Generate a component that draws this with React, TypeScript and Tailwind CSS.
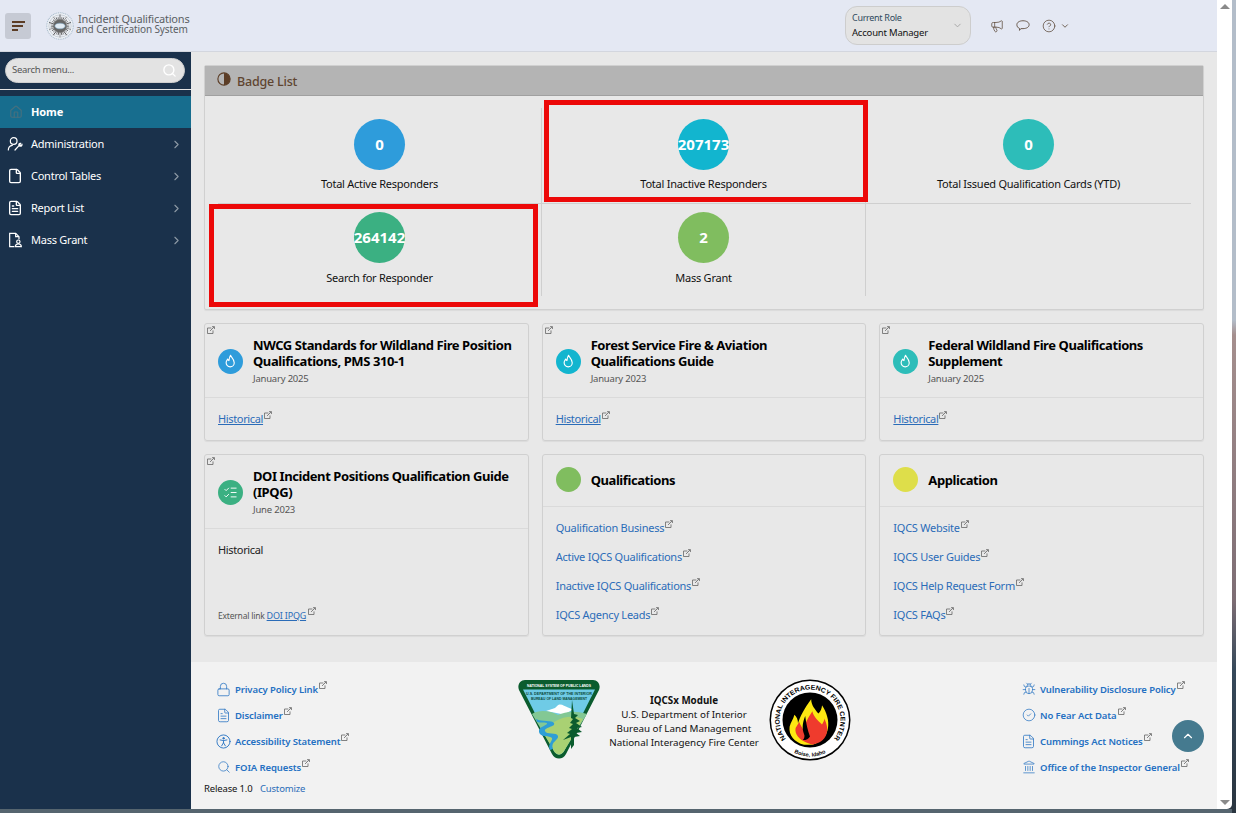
import { Home, File, FileText, ChevronRight, ChevronDown, ChevronUp, Search, Lock, Bug, CircleCheck, Landmark, Megaphone, CircleHelp, ListChecks } from "lucide-react";

const ExtIcon = ({ className = "" }: { className?: string }) => (
  <svg viewBox="0 0 10 10" className={"ml-[1px] inline-block h-[8px] w-[8px] text-[#707070] " + className} fill="none" stroke="currentColor" strokeWidth="1.100">
    <path d="M5.500 2.500H.6v6.900h6.900V5.500" />
    <path d="M3.800 6.200L9 1M6.300 .8H9.300V3.800" />
  </svg>
);

const FlameIcon = () => (
  <svg viewBox="0 0 24 24" className="h-[15px] w-[15px]" fill="none" stroke="white" strokeWidth="1.800" strokeLinejoin="round">
    <path d="M12 2c1 3 6 6 6 12a6.500 6.500 0 0 1-13 0c0-3 1.500-4.500 2.500-6 .5 1.500 1 2 2 2.500C10 7.500 10.500 4.500 12 2z" />
  </svg>
);

function AdminIcon() {
  return (
    <svg viewBox="0 0 24 24" className="h-[16px] w-[16px]" fill="none" stroke="white" strokeWidth="1.800" strokeLinecap="round">
      <circle cx="10" cy="7.500" r="5" />
      <path d="M2 21c0-4 2.500-6.500 6-7" />
      <path d="M12 21l6-6.500M18 14.500c-1-2 .5-4 2.500-3.500l-1.500 2 1.500 1.500 2-1.500c.2 2-1.800 3.200-4.500 1.500z" />
    </svg>
  );
}

function MassGrantIcon() {
  return (
    <svg viewBox="0 0 24 24" className="h-[16px] w-[16px]" fill="none" stroke="white" strokeWidth="1.800">
      <path d="M11 22H4V2h9l5 5v4" />
      <path d="M13 2v5h5" />
      <circle cx="17" cy="14.500" r="2.500" />
      <path d="M12.500 22c0-3 2-4 4.500-4s4.500 1 4.500 4z" />
    </svg>
  );
}

function SealLogo() {
  const rays = Array.from({ length: 30 }, (_, i) => i * 12);
  return (
    <svg viewBox="0 0 54 54" className="h-[28px] w-[28px] shrink-0">
      <circle cx="27" cy="27" r="25.500" fill="#eef1f6" stroke="#a9bccb" strokeWidth="2" strokeDasharray="2 1.500" />
      <circle cx="27" cy="27" r="21.500" fill="none" stroke="#9aa5b0" strokeWidth=".8" />
      {rays.map((r) => (
        <line key={r} x1="27" y1="16" x2="27" y2={r % 36 === 0 ? 5 : 9} stroke={r % 24 === 0 ? "#333" : "#777"} strokeWidth="1.400" transform={`rotate(${r} 27 27)`} />
      ))}
      <circle cx="27" cy="27" r="13" fill="#666" stroke="#999" strokeDasharray="3 2" />
      <ellipse cx="27" cy="27" rx="10" ry="5.500" fill="#e2ecf4" stroke="#7fa8c4" />
    </svg>
  );
}

function BlmLogo() {
  return (
    <svg viewBox="0 0 84 80" className="h-[80px] w-[84px] shrink-0">
      <path d="M8 1h68c5 0 8 5 6 10L49 75c-3 6-11 6-14 0L2 11C0 6 3 1 8 1z" fill="#0b5c2e" />
      <path d="M6 10.500h72L47 72c-2.500 4.500-7.500 4.500-10 0z" fill="#6fcbe6" />
      <path d="M29 32l9-3c2-2 4-4 5-3.500 3 0 5 2 8 3l5 2-9 5z" fill="white" />
      <path d="M15 35c8-5 18-3 26 1 7-3 16-5 29-1L47 72c-2.500 4.500-7.500 4.500-10 0z" fill="#83c894" />
      <path d="M26 53c10-12 24-19 40-13L47 72c-2.500 4.500-7.500 4.500-10 0z" fill="#a9d173" />
      <path d="M19 40c6 3 16 1 18 4 2 4-10 4-9 8 1 4 12 1 13 5s-8 6-5 13l-3 1c-3-6 3-9 2-12-2-3-12 0-13-6s9-6 8-9c-3-1-7 0-10-1z" fill="#2e9ed6" />
      <path d="M55 21l2 14 4 1-3 3 5 3-4 2 6 4-5 1 5 4-6 1 4 3-6 1v8l-3 4v-12l-8 3 7-6-3-1 5-4-3-1 4-4-3-1 3-4-2-1z" fill="#0b5c2e" />
      <text x="42" y="7.500" textAnchor="middle" fontSize="3.600" textLength="64" lengthAdjust="spacingAndGlyphs" fontWeight="700" fill="white" fontFamily="Liberation Sans, sans-serif">NATIONAL SYSTEM OF PUBLIC LANDS</text>
      <text x="42" y="15.500" textAnchor="middle" fontSize="3.800" textLength="66" lengthAdjust="spacingAndGlyphs" fontWeight="700" fill="#0b4a3a" fontFamily="Liberation Sans, sans-serif">U.S. DEPARTMENT OF THE INTERIOR</text>
      <text x="42" y="20.500" textAnchor="middle" fontSize="3.400" textLength="56" lengthAdjust="spacingAndGlyphs" fontWeight="700" fill="#0b4a3a" fontFamily="Liberation Sans, sans-serif">BUREAU OF LAND MANAGEMENT</text>
    </svg>
  );
}

function NifcLogo() {
  return (
    <svg viewBox="0 0 82 82" className="h-[82px] w-[82px] shrink-0">
      <circle cx="41" cy="41" r="40.500" fill="black" />
      <circle cx="41" cy="41" r="39" fill="white" />
      <circle cx="41" cy="41" r="27.500" fill="black" />
      <defs>
        <path id="nifcTop" d="M17.600 60.600A30.500 30.500 0 1 1 64.400 60.600" />
        <path id="nifcBottom" d="M22.750 72.600A36.500 36.500 0 0 0 59.250 72.600" />
      </defs>
      <text fontSize="6.600" fontWeight="700" fill="black" fontFamily="Liberation Sans, sans-serif">
        <textPath href="#nifcTop" startOffset="50%" textAnchor="middle" textLength="136" lengthAdjust="spacingAndGlyphs">NATIONAL INTERAGENCY FIRE CENTER</textPath>
      </text>
      <text fontSize="5.500" fontWeight="700" fill="black" fontFamily="Liberation Sans, sans-serif">
        <textPath href="#nifcBottom" startOffset="50%" textAnchor="middle">Boise, Idaho</textPath>
      </text>
      <g transform="translate(41 43) scale(1.200) translate(-41 -43)">
        <path d="M36 62c-8-2-13-8-12-15 1-4 3-6 4-10 2 2 3 4 3 7 2-6 5-12 11-20 0 5 3 8 6 12 2-2 3-5 3-7 4 6 6 13 5 19-1 7-6 12-13 14z" fill="#fde812" />
        <path d="M38 60c-6-2-10-7-9-12l3-5c1 3 3 5 4 8 0-6 3-11 7-17 1 5 5 8 8 11 1-2 2-3 2-5 2 5 3 8 2 12-1 5-5 8-9 9l-3 1z" fill="#ef3b2d" />
        <path d="M37 38c-2 5-3 10-1 15 1 2 0 4-1 5 3 0 5-1 6-3-2-5-3-10-4-17z" fill="black" />
      </g>
    </svg>
  );
}

function AccessIcon() {
  return (
    <svg viewBox="0 0 24 24" className="h-[15px] w-[15px]" fill="none" stroke="#2f78c4" strokeWidth="1.500" strokeLinecap="round">
      <circle cx="12" cy="12" r="10.500" />
      <circle cx="12" cy="6.800" r="1.200" fill="#2f78c4" />
      <path d="M6.500 9.500L12 10.500l5.500-1M12 10.500v3.500M12 14l-3 5M12 14l3 5" />
    </svg>
  );
}

const badges = [
  { value: "0", label: "Total Active Responders", color: "bg-[#2e9cdb]" },
  { value: "207173", label: "Total Inactive Responders", color: "bg-[#12b5cf]" },
  { value: "0", label: "Total Issued Qualification Cards (YTD)", color: "bg-[#2dbdb9]" },
  { value: "264142", label: "Search for Responder", color: "bg-[#3bb082]" },
  { value: "2", label: "Mass Grant", color: "bg-[#80bd5f]" },
];

const menu = [
  { name: "Administration", icon: <AdminIcon /> },
  { name: "Control Tables", icon: <File size={16} color="white" /> },
  { name: "Report List", icon: <FileText size={16} color="white" /> },
  { name: "Mass Grant", icon: <MassGrantIcon /> },
];

function Badge({ value, label, color, top, divider }: { value: string; label: string; color: string; top: string; divider: boolean }) {
  return (
    <div className={"flex flex-col items-center " + top + (divider ? " border-r border-[#cfcfcf]" : "")}>
      <div className={"flex h-[51px] w-[51px] items-center justify-center overflow-visible rounded-full text-[15px] font-bold text-white " + color}>{value}</div>
      <div className="mt-[7px] text-[11px] leading-[14px] tracking-[-0.25px] text-[#111]">{label}</div>
    </div>
  );
}

function GuideCard({ title, date, color, icon, children, tall }: { title: React.ReactNode; date?: string; color: string; icon?: React.ReactNode; children: React.ReactNode; tall?: boolean }) {
  return (
    <div className="flex flex-col rounded-[3px] border border-[#d0d0d0] shadow-[0_1px_1px_rgba(0,0,0,0.06)]">
      <div className={"flex flex-col border-b border-[#dadada] " + (tall ? "h-[52px] justify-center pb-[2px]" : "h-[74px]")}>
        {!tall && <div className="flex h-[3px] items-start pl-[1px] pt-[2px]"><ExtIcon className="shrink-0" /></div>}
        <div className={"flex items-center gap-[10px] pl-[13px] " + (tall ? "" : "pt-[10px]")}>
          <div className={"flex h-[25px] w-[25px] shrink-0 items-center justify-center rounded-full " + color}>{icon}</div>
          <div>
            <div className="text-[13px] font-bold leading-[16px] tracking-[-0.42px] text-black">{title}</div>
            {date && <div className="mt-[3px] text-[9.500px] leading-[13px] tracking-[-0.2px] text-[#555]">{date}</div>}
          </div>
        </div>
      </div>
      {children}
    </div>
  );
}

function CardLink({ text }: { text: string }) {
  return (
    <div className="text-[11px] leading-[14px] tracking-[-0.25px] text-[#2b6cb8]">
      {text}<ExtIcon className="align-[4px]" />
    </div>
  );
}

function Historical() {
  return (
    <div className="pl-[13px] pt-[13px] text-[11px] leading-[16px] tracking-[-0.35px] text-[#2b6cb8]">
      <span className="underline">Historical</span><ExtIcon className="align-[4px]" />
    </div>
  );
}

function FootLink({ icon, text }: { icon: React.ReactNode; text: string }) {
  return (
    <div className="flex h-[26px] items-center gap-[4px]">
      <span className="flex w-[15px] shrink-0 justify-center">{icon}</span>
      <span className="text-[9.500px] font-semibold tracking-[-0.1px] text-[#2470c2]">
        {text}<ExtIcon className="align-[4px]" />
      </span>
    </div>
  );
}

export default function App() {
  return (
    <div className="relative flex h-[813px] w-[1236px] flex-col overflow-hidden bg-[linear-gradient(180deg,#b3bdc9_0,#b3bdc9_320px,#a58f8e_335px,#7d6d74_600px,#36495a_670px,#2a3540_813px)] font-['Noto_Sans',sans-serif]">
      <div className="flex h-[809px] w-[1232px]">
        <div className="flex w-[1217px] flex-col">
          <header className="flex h-[52px] shrink-0 items-center justify-between border-b border-[#d3d6de] bg-[#e4e8f3] pr-[147px]">
            <div className="flex items-center">
              <button className="ml-[5px] flex h-[26px] w-[26px] flex-col justify-center gap-[2px] rounded-[3px] bg-[#c6cad4] pl-[7px]">
                <span className="h-[2px] w-[13px] bg-[#5c3d26]" />
                <span className="h-[2px] w-[11px] bg-[#5c3d26]" />
                <span className="h-[2px] w-[6px] bg-[#5c3d26]" />
              </button>
              <div className="ml-[15px]"><SealLogo /></div>
              <div className="mb-[4px] ml-[2px] leading-[10px] text-[#5b5f63]">
                <div className="ml-[2px] text-[11px] tracking-[-0.2px]">Incident Qualifications</div>
                <div className="text-[10px] tracking-[-0.1px]">and Certification System</div>
              </div>
            </div>
            <div className="flex items-center">
              <div className="flex h-[39px] w-[126px] items-center justify-between rounded-[12px] border border-[#cdcdcd] bg-[#e3e3e3] pl-[6px] pr-[7px]">
                <div>
                  <div className="text-[9px] leading-[14px] tracking-[-0.3px] text-[#2f4a5e]">Current Role</div>
                  <div className="mt-[1px] text-[9.500px] leading-[14px] tracking-[-0.2px] text-[#111]">Account Manager</div>
                </div>
                <ChevronDown size={11} color="#a3a3a3" />
              </div>
              <Megaphone size={14} color="#5c4a3a" strokeWidth={1.300} className="ml-[19px]" />
              <svg viewBox="0 0 16 16" className="ml-[12px] h-[14px] w-[14px]" fill="none" stroke="#5c4a3a" strokeWidth="1">
                <path d="M8 2c3.800 0 7 1.700 7 4.500S12 11 8 11H5.500l-1.500 2v-2.200C2 10 1 8.500 1 6.500 1 3.700 4.200 2 8 2z" />
              </svg>
              <CircleHelp size={14} color="#5c4a3a" strokeWidth={1.300} className="ml-[12px]" />
              <ChevronDown size={10} color="#5c4a3a" className="ml-[4px]" />
            </div>
          </header>

          <div className="flex min-h-0 flex-1">
            <aside className="w-[191px] shrink-0 bg-[#1a314b]">
              <div className="px-[5px] pt-[6px]">
                <div className="flex h-[25px] w-[180px] items-center justify-between rounded-full border border-[#cfcfcf] bg-[#e3e3e3] pl-[6px] pr-[7px] text-[9.500px] tracking-[-0.3px] text-[#555]">
                  Search menu...
                  <Search size={15} color="white" strokeWidth={2.200} />
                </div>
              </div>
              <div className="mt-[6px] h-px bg-[#e6e6e6]" />
              <div className="mt-[6px] flex h-[32px] items-center bg-[#176d8e] pl-[9px]">
                <Home size={14} color="#45707f" />
                <span className="ml-[8px] text-[11px] font-bold tracking-[-0.1px] text-white">Home</span>
              </div>
              {menu.map((m) => (
                <div key={m.name} className="flex h-[32px] items-center pl-[7px] pr-[8px]">
                  <span className="flex w-[16px] justify-center">{m.icon}</span>
                  <span className="ml-[8px] flex-1 text-[11px] tracking-[-0.25px] text-white">{m.name}</span>
                  <ChevronRight size={13} color="#8d99a5" />
                </div>
              ))}
            </aside>

            <div className="flex min-w-0 flex-1 flex-col">
              <main className="flex-1 bg-[#e8e8e8] px-[13px] pt-[13px]">
                <section className="relative h-[245px] rounded-[2px] border border-[#d0d0d0] shadow-[0_1px_1px_rgba(0,0,0,0.06)]">
                  <div className="flex h-[30px] items-center border-b border-[#a0a0a0] bg-[#b4b4b4] pl-[12px]">
                    <svg viewBox="0 0 16 16" className="mb-[3px] h-[14px] w-[14px]">
                      <circle cx="8" cy="8" r="7" fill="none" stroke="#5c3d26" strokeWidth="1.300" />
                      <path d="M8 1a7 7 0 0 1 0 14z" fill="#5c3d26" />
                    </svg>
                    <span className="ml-[6px] mt-[3px] text-[12.500px] font-medium tracking-[-0.2px] text-[#5f4530]">Badge List</span>
                  </div>
                  <div className="mx-[13px] mt-[12px] grid grid-cols-[324px_324px_325px] grid-rows-[96px_92px]">
                    <Badge {...badges[0]} top="pt-[11px] border-b border-[#cfcfcf]" divider />
                    <Badge {...badges[1]} top="pt-[11px] border-b border-[#cfcfcf]" divider />
                    <Badge {...badges[2]} top="pt-[11px] border-b border-[#cfcfcf]" divider={false} />
                    <Badge {...badges[3]} top="pt-[8px] [&>div:last-child]:mt-[8px]" divider />
                    <Badge {...badges[4]} top="pt-[8px] [&>div:last-child]:mt-[8px]" divider />
                    <div />
                  </div>
                  {/* highlight boxes drawn over the screenshot */}
                  <div className="absolute left-[339px] top-[34px] h-[102px] w-[324px] border-[5px] border-[#ec0808]" />
                  <div className="absolute left-[4px] top-[138px] h-[103px] w-[329px] border-[5px] border-[#ec0808]" />
                </section>

                <div className="mt-[13px] grid grid-cols-3 grid-rows-[118px_182px] gap-x-[13px] gap-y-[13px]">
                  <GuideCard title="NWCG Standards for Wildland Fire Position Qualifications, PMS 310-1" date="January 2025" color="bg-[#2e9cdb]" icon={<FlameIcon />}>
                    <Historical />
                  </GuideCard>
                  <GuideCard title={<>Forest Service Fire &amp; Aviation<br />Qualifications Guide</>} date="January 2023" color="bg-[#12b5cf]" icon={<FlameIcon />}>
                    <Historical />
                  </GuideCard>
                  <GuideCard title={<>Federal Wildland Fire Qualifications<br />Supplement</>} date="January 2025" color="bg-[#2dbdb9]" icon={<FlameIcon />}>
                    <Historical />
                  </GuideCard>

                  <GuideCard title="DOI Incident Positions Qualification Guide (IPQG)" date="June 2023" color="bg-[#3bb082]" icon={<ListChecks size={15} color="white" strokeWidth={1.500} />}>
                    <div className="flex flex-1 flex-col justify-between px-[13px] pb-[12px] pt-[13px]">
                      <div className="text-[11px] leading-[16px] tracking-[-0.35px] text-[#222]">Historical</div>
                      <div className="text-[8.500px] leading-[14px] tracking-[-0.2px] text-[#555]">
                        External link <span className="text-[9px] text-[#2b6cb8] underline">DOI IPQG</span><ExtIcon className="ml-[2px] align-[4px]" />
                      </div>
                    </div>
                  </GuideCard>
                  <GuideCard tall title="Qualifications" color="bg-[#80bd5f]">
                    <div className="flex flex-col gap-[13.900px] pl-[13px] pt-[13px]">
                      <CardLink text="Qualification Business" />
                      <CardLink text="Active IQCS Qualifications" />
                      <CardLink text="Inactive IQCS Qualifications" />
                      <CardLink text="IQCS Agency Leads" />
                    </div>
                  </GuideCard>
                  <GuideCard tall title="Application" color="bg-[#dede4a]">
                    <div className="flex flex-col gap-[13.900px] pl-[13px] pt-[13px]">
                      <CardLink text="IQCS Website" />
                      <CardLink text="IQCS User Guides" />
                      <CardLink text="IQCS Help Request Form" />
                      <CardLink text="IQCS FAQs" />
                    </div>
                  </GuideCard>
                </div>
              </main>

              <footer className="flex h-[147px] shrink-0 bg-[#f2f2f2]">
                <div className="w-[326px] shrink-0 pl-[25px] pt-[14px]">
                  <FootLink icon={<Lock size={15} color="#2f78c4" strokeWidth={1.300} />} text="Privacy Policy Link" />
                  <FootLink icon={<FileText size={15} color="#2f78c4" strokeWidth={1.300} />} text="Disclaimer" />
                  <FootLink icon={<AccessIcon />} text="Accessibility Statement" />
                  <FootLink icon={<Search size={14} color="#2f78c4" strokeWidth={1.300} />} text="FOIA Requests" />
                  <div className="-ml-[12px] mt-[2px] text-[9.500px] leading-[14px] tracking-[-0.15px] text-[#111]">
                    Release 1.0 <span className="ml-[5px] text-[#2b6cb8]">Customize</span>
                  </div>
                </div>
                <div className="flex w-[334px] shrink-0 items-start pt-[17px]">
                  <BlmLogo />
                  <div className="-ml-[2px] w-[170px] shrink-0 pt-[15px] text-center text-[9.800px] leading-[14px] text-[#111]">
                    <div className="font-bold">IQCSx Module</div>
                    <div>U.S. Department of Interior</div>
                    <div>Bureau of Land Management</div>
                    <div>National Interagency Fire Center</div>
                  </div>
                  <NifcLogo />
                </div>
                <div className="ml-[170px] pt-[14px]">
                  <FootLink icon={<Bug size={14} color="#2f78c4" strokeWidth={1.300} />} text="Vulnerability Disclosure Policy" />
                  <FootLink icon={<CircleCheck size={14} color="#2f78c4" strokeWidth={1.300} />} text="No Fear Act Data" />
                  <FootLink icon={<FileText size={15} color="#2f78c4" strokeWidth={1.300} />} text="Cummings Act Notices" />
                  <FootLink icon={<Landmark size={14} color="#2f78c4" strokeWidth={1.300} />} text="Office of the Inspector General" />
                </div>
              </footer>
            </div>
          </div>
        </div>

        <div className="flex w-[15px] flex-col items-center justify-between rounded-br-[5px] bg-white py-[4px]">
          <div className="h-0 w-0 border-x-[5px] border-b-[5px] border-x-transparent border-b-[#8a8a8a]" />
          <div className="h-0 w-0 border-x-[5px] border-t-[5px] border-x-transparent border-t-[#8a8a8a]" />
        </div>
      </div>
      <div className="h-[4px] w-[1232px] bg-[#56656f]" />

      <button className="absolute left-[1172px] top-[720px] flex h-[32px] w-[32px] items-center justify-center rounded-full bg-[#457a8f]">
        <ChevronUp size={14} color="white" />
      </button>
    </div>
  );
}
